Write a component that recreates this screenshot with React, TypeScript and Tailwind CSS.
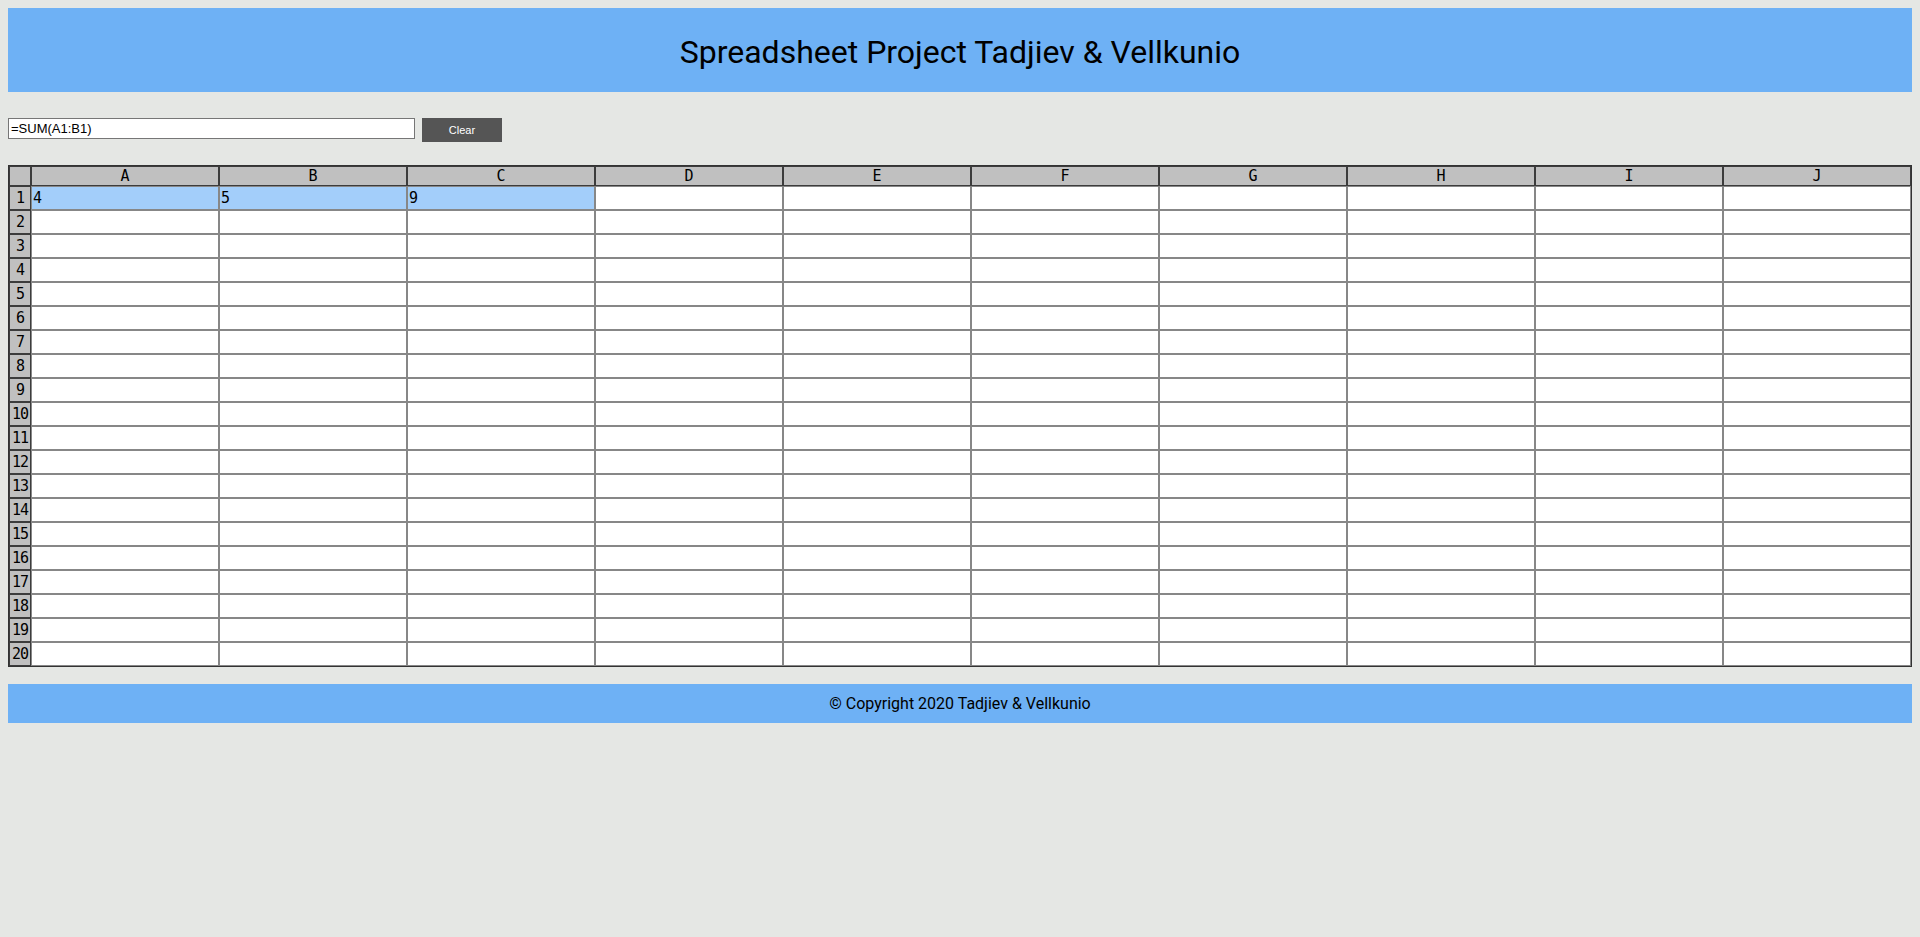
import React from 'react';

const COLS = ['A', 'B', 'C', 'D', 'E', 'F', 'G', 'H', 'I', 'J'];
const ROWS = Array.from({ length: 20 }, (_, i) => i + 1);

// only row 1 holds values in this sheet
const VALUES: Record<string, string> = { A1: '4', B1: '5', C1: '9' };
const SELECTED = ['A1', 'B1', 'C1'];

const App: React.FC = () => {
  return (
    <div className="min-h-[937px] bg-[#e5e7e4] px-2 pt-2 pb-4">
      {/* Header */}
      <header className="h-[84px] bg-[#6eb1f5] flex items-center justify-center">
        <h1 className="text-[32px] leading-none text-black font-['Roboto',sans-serif] font-normal pt-1">
          Spreadsheet Project Tadjiev &amp; Vellkunio
        </h1>
      </header>

      {/* Formula bar */}
      <div className="mt-[26px] flex items-start gap-[7px]">
        <input
          type="text"
          readOnly
          value="=SUM(A1:B1)"
          className="w-[407px] h-[21px] bg-white border border-[#767676] px-[2px] text-[13px] text-black font-['Liberation_Sans',Arial,sans-serif] outline-none"
        />
        <button className="w-[80px] h-[24px] bg-[#555555] text-white text-[11px] font-['Liberation_Sans',Arial,sans-serif]">
          Clear
        </button>
      </div>

      {/* Sheet */}
      <table className="mt-[23px] w-full table-fixed border-separate border-spacing-0 border border-[#333333] font-['DejaVu_Sans_Mono',monospace] text-[15px] text-black">
        <colgroup>
          <col className="w-[22px]" />
          {COLS.map((c) => (
            <col key={c} className="w-[188px]" />
          ))}
        </colgroup>
        <thead>
          <tr>
            <th className="h-[20px] p-0 bg-[#c0c0c0] border border-[#3c3c3c]"></th>
            {COLS.map((c) => (
              <th
                key={c}
                className="h-[20px] p-0 bg-[#c0c0c0] border border-[#3c3c3c] font-normal text-center leading-none"
              >
                {c}
              </th>
            ))}
          </tr>
        </thead>
        <tbody>
          {ROWS.map((r) => (
            <tr key={r}>
              <td className="h-[24px] p-0 bg-[#c0c0c0] border border-[#3c3c3c] text-center leading-none tracking-[-1px]">
                {r}
              </td>
              {COLS.map((c) => {
                const id = `${c}${r}`;
                const isSel = SELECTED.includes(id);
                return (
                  <td
                    key={id}
                    className={`h-[24px] px-[1px] py-0 border border-[#878787] leading-none ${
                      isSel ? 'bg-[#a3cefa]' : 'bg-white'
                    }`}
                  >
                    {VALUES[id] || ''}
                  </td>
                );
              })}
            </tr>
          ))}
        </tbody>
      </table>

      {/* Footer */}
      <footer className="mt-[17px] h-[39px] bg-[#6eb1f5] flex items-center justify-center">
        <p className="text-[16px] text-black font-['Roboto',sans-serif]">
          © Copyright 2020 Tadjiev &amp; Vellkunio
        </p>
      </footer>
    </div>
  );
};

export default App;
